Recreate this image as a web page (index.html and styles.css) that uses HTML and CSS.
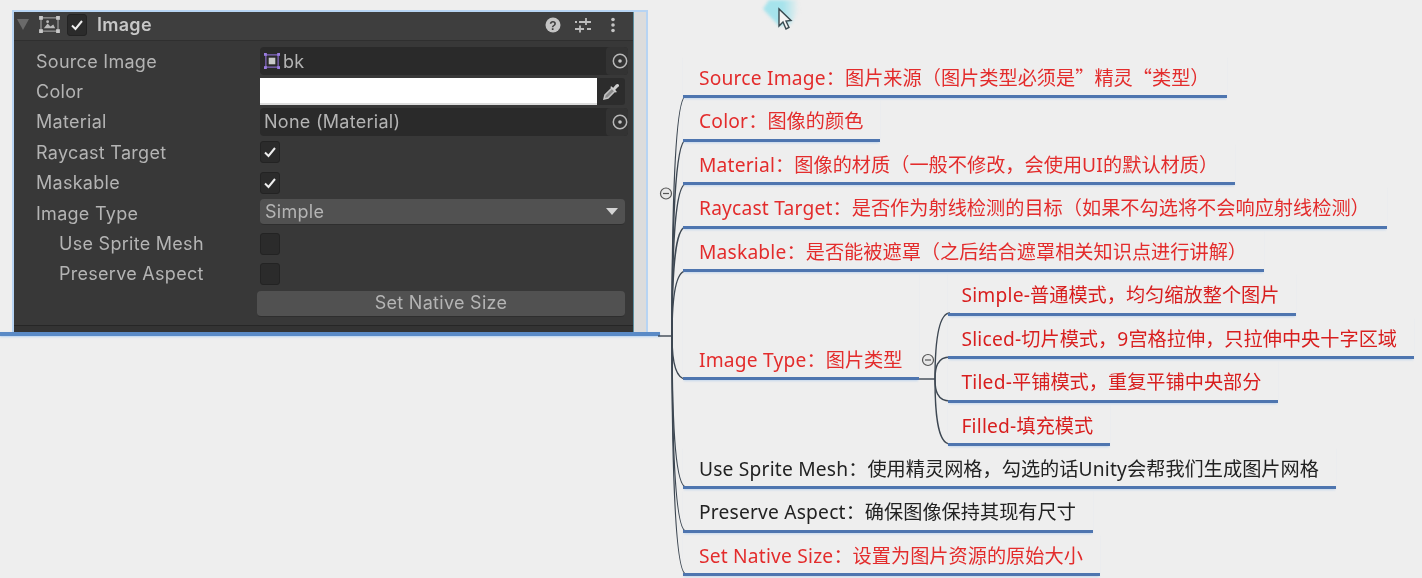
FILE: index.html
```html
<!DOCTYPE html>
<html lang="zh-CN">

<head>
  <meta charset="UTF-8">
  <title>Image component</title>
  <link rel="stylesheet" href="styles.css">
</head>

<body>
  <svg class="wires" width="1422" height="578" viewBox="0 0 1422 578">
    <g class="wire">
      <path d="M658 336H672" />
      <path d="M672 336C672 210 675 96 686 96" />
      <path d="M672 336C672 230 675 140 686 140" />
      <path d="M672 336C672 250 675 184 686 184" />
      <path d="M672 336C672 270 675 227 686 227" />
      <path d="M672 336C672 300 675 271 686 271" />
      <path d="M672 336C672 360 675 379 686 379" />
      <path d="M672 336C672 420 675 487 686 487" />
      <path d="M672 336C672 440 675 531 686 531" />
      <path d="M672 336C672 460 675 574 686 574" />
      <path d="M916 379H935" />
      <path d="M935 379C935 350 937 313 950 313" />
      <path d="M935 379C935 368 937 357 950 357" />
      <path d="M935 379C935 390 937 401 950 401" />
      <path d="M935 379C935 410 937 444 950 444" />
    </g>
    <g class="fold">
      <circle cx="666" cy="193.500" r="5.500" />
      <path d="M663 193.500H669" />
      <circle cx="928" cy="360" r="5.500" />
      <path d="M925 360H931" />
    </g>
  </svg>

  <div class="left">
    <div class="selection">
      <div class="inspector">
        <div class="head">
          <svg class="fold-arrow" width="12" height="11" viewBox="0 0 12 11"><path d="M0 0H12L6 11Z" /></svg>
          <svg class="img-icon" width="21" height="17" viewBox="0 0 22 18">
            <rect x="2" y="2" width="18" height="14" fill="none" stroke="#b8b8b8" />
            <path d="M5 13L9 8L12 11L15 9L17 13Z" fill="#b8b8b8" />
            <circle cx="9" cy="6" r="1.500" fill="#b8b8b8" />
            <g fill="#c8c8c8"><rect x="0" y="0" width="4" height="4" /><rect x="18" y="0" width="4" height="4" /><rect x="0" y="14" width="4" height="4" /><rect x="18" y="14" width="4" height="4" /></g>
          </svg>
          <span class="check head-check"><svg width="14" height="12" viewBox="0 0 14 12"><path d="M2 6.500L5.500 10L12 2" /></svg></span>
          <span class="title">Image</span>
          <span class="head-icons">
            <svg width="16" height="16" viewBox="0 0 16 16">
              <circle cx="8" cy="8" r="7.500" fill="#c4c4c4" />
              <text x="8" y="12.500" class="help-mark">?</text>
            </svg>
            <svg width="18" height="16" viewBox="0 0 18 16">
              <path d="M1 5H3M5 5H17M12 1V8M1 12H10M13 12H17M6 8.500V15.500" fill="none" stroke="#bdbdbd" stroke-width="1.800" />
            </svg>
            <svg class="menu-dots" width="6" height="16" viewBox="0 0 6 16">
              <g fill="#c4c4c4"><circle cx="3" cy="2.500" r="1.800" /><circle cx="3" cy="8" r="1.800" /><circle cx="3" cy="13.500" r="1.800" /></g>
            </svg>
          </span>
        </div>
        <div class="rows">
          <div class="row">
            <span class="label">Source Image</span>
            <div class="field">
              <svg class="sprite" width="16" height="16" viewBox="0 0 17 17">
                <rect x="2" y="2" width="13" height="13" fill="none" stroke="#8d6fd0" stroke-width="1.200" />
                <rect x="5" y="5" width="7" height="7" fill="#c9c9c9" />
                <g fill="#9a7ce0"><rect x="0" y="0" width="3" height="3" /><rect x="14" y="0" width="3" height="3" /><rect x="0" y="14" width="3" height="3" /><rect x="14" y="14" width="3" height="3" /></g>
              </svg>
              <span>bk</span>
              <span class="picker"><svg width="16" height="16" viewBox="0 0 16 16"><circle cx="8" cy="8" r="6.700" fill="none" stroke="#b8b8b8" stroke-width="1.500" /><circle cx="8" cy="8" r="1.800" fill="#c4c4c4" /></svg></span>
            </div>
          </div>
          <div class="row">
            <span class="label">Color</span>
            <div class="color-field">
              <span class="swatch"></span>
              <span class="dropper"><svg width="17" height="17" viewBox="0 0 17 17"><path d="M1 16L2 12L9 5L12 8L5 15Z" fill="#8a8a8a" stroke="#c4c4c4" stroke-width="1.500" /><path d="M8 3L10 5L13 1.500Q15 0.500 16 2Q16.500 3.500 15 4L12 7L14 9L12.500 9.500L7.500 4.500Z" fill="#cfcfcf" /></svg></span>
            </div>
          </div>
          <div class="row">
            <span class="label">Material</span>
            <div class="field">
              <span>None (Material)</span>
              <span class="picker"><svg width="16" height="16" viewBox="0 0 16 16"><circle cx="8" cy="8" r="6.700" fill="none" stroke="#b8b8b8" stroke-width="1.500" /><circle cx="8" cy="8" r="1.800" fill="#c4c4c4" /></svg></span>
            </div>
          </div>
          <div class="row">
            <span class="label">Raycast Target</span>
            <span class="check"><svg width="14" height="12" viewBox="0 0 14 12"><path d="M2 6.500L5.500 10L12 2" /></svg></span>
          </div>
          <div class="row">
            <span class="label">Maskable</span>
            <span class="check"><svg width="14" height="12" viewBox="0 0 14 12"><path d="M2 6.500L5.500 10L12 2" /></svg></span>
          </div>
          <div class="row">
            <span class="label">Image Type</span>
            <div class="dropdown">
              <span>Simple</span>
              <svg width="12" height="7" viewBox="0 0 12 7"><path d="M0 0H12L6 7Z" fill="#d4d4d4" /></svg>
            </div>
          </div>
          <div class="row">
            <span class="label sub-label">Use Sprite Mesh</span>
            <span class="check"></span>
          </div>
          <div class="row">
            <span class="label sub-label">Preserve Aspect</span>
            <span class="check"></span>
          </div>
          <div class="row">
            <span></span>
            <div class="native-btn">Set Native Size</div>
          </div>
        </div>
      </div>
      <div class="strip"></div>
    </div>
    <div class="root-line"></div>
  </div>

  <div class="map">
    <div class="node red"><span class="en">Source Image</span>：图片来源（图片类型必须是”精灵“类型）</div>
    <div class="node red"><span class="en">Color</span>：图像的颜色</div>
    <div class="node red"><span class="en">Material</span>：图像的材质（一般不修改，会使用<span class="en">UI</span>的默认材质）</div>
    <div class="node red"><span class="en">Raycast Target</span>：是否作为射线检测的目标（如果不勾选将不会响应射线检测）</div>
    <div class="node red"><span class="en">Maskable</span>：是否能被遮罩（之后结合遮罩相关知识点进行讲解）</div>
    <div class="type-group">
      <div class="node red type-node"><span class="en">Image Type</span>：图片类型</div>
      <div class="sub-nodes">
        <div class="node dark-red"><span class="en">Simple-</span>普通模式，均匀缩放整个图片</div>
        <div class="node dark-red"><span class="en">Sliced-</span>切片模式，<span class="en">9</span>宫格拉伸，只拉伸中央十字区域</div>
        <div class="node dark-red"><span class="en">Tiled-</span>平铺模式，重复平铺中央部分</div>
        <div class="node dark-red"><span class="en">Filled-</span>填充模式</div>
      </div>
    </div>
    <div class="node"><span class="en">Use Sprite Mesh</span>：使用精灵网格，勾选的话<span class="en">Unity</span>会帮我们生成图片网格</div>
    <div class="node"><span class="en">Preserve Aspect</span>：确保图像保持其现有尺寸</div>
    <div class="node red"><span class="en">Set Native Size</span>：设置为图片资源的原始大小</div>
  </div>

  <svg class="cursor" width="42" height="32" viewBox="0 0 42 32">
    <defs>
      <linearGradient id="blob-fade" x1="0" x2="1" y1="0" y2="0">
        <stop offset="0.550" stop-color="#a6e3ec" />
        <stop offset="1" stop-color="#eeeeee" />
      </linearGradient>
    </defs>
    <path class="blob" d="M8 0H36L38 10L30 24L18 26L2 9Z" />
    <path class="arrow" d="M18 9V26L22 22L25 29L28 27.500L25 21L30 20.500Z" />
  </svg>
</body>

</html>
```

FILE: styles.css
```css
* {
  box-sizing: border-box;
}

body {
  margin: 0;
  display: flex;
  height: 578px;
  overflow: hidden;
  background: #eeeeee;
  font-family: "Noto Sans CJK SC", "Noto Sans", sans-serif;
}

.wires {
  position: absolute;
  top: 0;
  left: 0;
}

.wire path {
  fill: none;
  stroke: #3d4752;
  stroke-width: 1.4;
}

.fold circle {
  fill: #e8e8e8;
  stroke: #555;
  stroke-width: 1.2;
}

.fold path {
  stroke: #555;
  stroke-width: 1.2;
}

.left {
  width: 660px;
  flex: none;
}

.selection {
  display: flex;
  width: 636px;
  height: 322px;
  margin: 10px 0 0 12px;
  border: solid #b7d4f3;
  border-width: 2px 2px 0 2px;
}

.root-line {
  height: 4px;
  background: #5a8ac6;
  box-shadow: 0 1px 2px #b7d4f3;
}

.inspector {
  width: 619px;
  background: #383838;
  border-bottom: 6px solid #333;
  box-shadow: inset 0 -1px 0 #262626;
  font-family: Inter, sans-serif;
  font-size: 18px;
  letter-spacing: 0.28px;
  color: #b4b4b4;
  filter: blur(0.35px);
}

.strip {
  flex: 1;
  background: #dcdcdc;
  border-left: 1px solid #5d8fa0;
}

.head {
  display: flex;
  align-items: center;
  height: 29px;
  padding: 0 0 3px 3px;
  background: #3e3e3e;
  border-bottom: 1px solid #2f2f2f;
}

.fold-arrow {
  fill: #6a6a6a;
}

.img-icon {
  margin-left: 10px;
}

.head-check {
  margin-left: 7px;
}

.title {
  margin-left: 10px;
  font-weight: 600;
  color: #c8c8c8;
}

.head-icons {
  display: flex;
  align-items: center;
  gap: 13px;
  margin-left: auto;
  padding-right: 17px;
}

.menu-dots {
  margin-left: 5px;
}

.help-mark {
  font: 700 12px "Liberation Sans", sans-serif;
  text-anchor: middle;
  fill: #3e3e3e;
}

.rows {
  padding: 5px 8px 0 22px;
}

.row {
  display: grid;
  grid-template-columns: 224px 1fr;
  align-items: center;
  height: 30.4px;
}

.sub-label {
  padding-left: 23px;
}

.field {
  display: flex;
  align-items: center;
  height: 28px;
  margin-right: -3px;
  padding-left: 4px;
  gap: 3px;
  background: #2a2a2a;
  border-radius: 4px;
  overflow: hidden;
}

.sprite {
  flex: none;
}

.picker {
  display: flex;
  align-items: center;
  justify-content: flex-end;
  width: 22px;
  height: 100%;
  margin-left: auto;
  background: #333;
  border-radius: 4px 0 0 4px;
}

.color-field {
  display: flex;
  height: 27px;
  background: #2c2c2c;
  border-radius: 3px;
}

.swatch {
  width: 337px;
  background: #fff;
  border-bottom: 2px solid #ddd;
}

.dropper {
  display: flex;
  align-items: center;
  justify-content: center;
  flex: 1;
}

.check {
  display: flex;
  align-items: center;
  justify-content: center;
  width: 20px;
  height: 22px;
  background: #2b2b2b;
  border: 1px solid #232323;
  border-radius: 3px;
}

.check path {
  fill: none;
  stroke: #eee;
  stroke-width: 2;
}

.dropdown {
  display: flex;
  align-items: center;
  justify-content: space-between;
  height: 26px;
  margin-top: -2px;
  padding: 0 7px 0 5px;
  background: #515151;
  border-bottom: 1px solid #2e2e2e;
  border-radius: 4px;
}

.native-btn {
  height: 26px;
  margin-left: -3px;
  line-height: 24px;
  text-align: center;
  background: #515151;
  border-bottom: 1px solid #2e2e2e;
  border-radius: 4px;
}

.map {
  flex: 1;
  display: flex;
  flex-direction: column;
  align-items: flex-start;
  padding: 55px 0 0 23px;
  font-size: 19.2px;
  color: #222;
  filter: blur(0.35px);
}

.node {
  flex: none;
  width: fit-content;
  height: 43.45px;
  padding: 9px 17px 0 16px;
  white-space: nowrap;
  line-height: 26px;
  border-bottom: 3px solid #4e75af;
  box-shadow: 0 2px 2px -1px #c3d6ec;
}

.en {
  font-family: "Noto Sans", sans-serif;
  letter-spacing: 0.2px;
}

.red {
  color: #e32c2c;
}

.dark-red {
  color: #d81e1e;
}

.type-group {
  display: flex;
  align-items: flex-start;
  flex: none;
  height: 173.8px;
}

.type-node {
  height: 108px;
  padding-top: 74px;
}

.sub-nodes {
  display: flex;
  flex-direction: column;
  align-items: flex-start;
  margin-left: 29px;
}

.sub-nodes .node {
  padding-left: 13px;
}

.cursor {
  position: absolute;
  top: 0;
  left: 761px;
}

.blob {
  fill: url(#blob-fade);
  filter: blur(1.5px);
}

.arrow {
  fill: #f4f4f4;
  stroke: #3a4a50;
  stroke-width: 1.4;
}
```
